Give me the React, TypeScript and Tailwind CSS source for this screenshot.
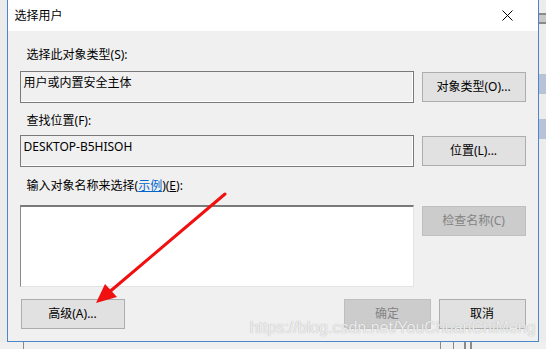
import React from "react";

const font = { fontFamily: '"Noto Sans", "Noto Sans CJK SC", sans-serif' };

function Btn({
	children,
	disabled,
	className = "",
}: {
	children: React.ReactNode;
	disabled?: boolean;
	className?: string;
}) {
	return (
		<div
			className={
				"flex h-[30px] items-center justify-center border text-[12px] leading-[16px] " +
				(disabled
					? "border-[#bfbfbf] bg-[#cccccc] text-[#838383] "
					: "border-[#adadad] bg-[#e1e1e1] text-black ") +
				className
			}
		>
			{children}
		</div>
	);
}

function Label({ children, className = "" }: { children: React.ReactNode; className?: string }) {
	return (
		<div className={"h-[16px] pl-[7px] text-[12px] leading-[16px] text-black " + className}>
			{children}
		</div>
	);
}

function ReadOnlyBox({ text }: { text: string }) {
	return (
		<div className="h-[32px] w-[394px] border border-[#7a7a7a] bg-[#f0f0f0] px-[3px] pt-[3px] text-[12px] leading-[16px] text-black shadow-[inset_-1px_-1px_0_#ffffff]">
			{text}
		</div>
	);
}

export default function App() {
	return (
		<div className="h-[349px] w-[546px] overflow-hidden bg-[#ececec]" style={font}>
			<div className="flex h-[342px]">
				{/* left backdrop */}
				<div className="w-[7px] bg-[#ebebeb]" />

				{/* dialog */}
				<div className="relative flex w-[532px] flex-col border-x border-b border-[#4a86c8] bg-[#f0f0f0]">
					<div className="flex h-[31px] shrink-0 items-center justify-between bg-white pl-[7px] pr-[25px]">
						<span className="text-[12px] leading-[16px] text-black">选择用户</span>
						<svg width="11" height="11" viewBox="0 0 11 11">
							<path d="M0.5 0.5 L10.5 10.5 M10.5 0.5 L0.5 10.5" stroke="#000" strokeWidth="1" />
						</svg>
					</div>

					<div className="flex flex-col px-[12px]">
						<Label className="mt-[16px]">选择此对象类型(S):</Label>
						<div className="mt-[8px] flex items-start gap-[8px]">
							<ReadOnlyBox text="用户或内置安全主体" />
							<Btn className="mt-[1px] w-[104px]">对象类型(O)...</Btn>
						</div>

						<Label className="mt-[10px]">查找位置(F):</Label>
						<div className="mt-[6px] flex items-start gap-[8px]">
							<ReadOnlyBox text="DESKTOP-B5HISOH" />
							<Btn className="mt-[1px] w-[104px]">位置(L)...</Btn>
						</div>

						<Label className="mt-[11px]">
							输入对象名称来选择(
							<span className="text-[#0066cc] underline">示例</span>
							)(<span className="underline">E</span>):
						</Label>
						<div className="mt-[11px] flex items-start gap-[8px]">
							<div className="h-[82px] w-[394px] border border-t-2 border-[#e3e3e3] border-t-[#7a7a7a] border-l-[#8a8a8a] bg-white" />
							<Btn disabled className="mt-[1px] w-[104px]">
								检查名称(C)
							</Btn>
						</div>

						<div className="mt-[12px] flex items-center">
							<Btn className="ml-[1px] w-[104px]">高级(A)...</Btn>
							<div className="flex-1" />
							<Btn disabled className="w-[87px]">
								确定
							</Btn>
							<Btn className="ml-[8px] w-[87px]">取消</Btn>
						</div>
					</div>

					{/* watermark */}
					<div
						className="pointer-events-none absolute bottom-[4px] right-[2px] whitespace-nowrap text-[16px] leading-[18px] text-white/80 [text-shadow:0_0_1px_#9a9a9a]"
						style={{ fontFamily: '"Liberation Sans", Arial, sans-serif' }}
					>
						https://blog.csdn.net/YouChuanChiMeng
					</div>

					{/* red annotation arrow */}
					<svg
						className="pointer-events-none absolute left-0 top-0"
						width="532"
						height="342"
						viewBox="7 0 532 342"
					>
						<line x1="224" y1="194" x2="106" y2="294" stroke="#f01010" strokeWidth="3" strokeLinecap="round" />
						<polygon points="95,303 104,284 116,297" fill="#f01010" />
					</svg>
				</div>

				{/* right backdrop */}
				<div className="flex w-[8px] flex-col bg-[#ececec]">
					<div className="h-[13px]" />
					<div className="h-[2px] bg-[#8a8a8a]" />
					<div className="h-[7px] bg-[#c8c8c8]" />
					<div className="h-[2px] bg-[#8a8a8a]" />
					<div className="h-[50px]" />
					<div className="h-[20px] bg-[#b7c3d6]" />
					<div className="h-[25px]" />
					<div className="h-[20px] bg-[#b7c3d6]" />
				</div>
			</div>

			{/* bottom backdrop */}
			<div className="flex h-[7px] bg-[#f0f0f0]">
				<div className="ml-[23px] w-px bg-[#8a8a8a]" />
				<div className="ml-[416px] w-px bg-[#8a8a8a]" />
				<div className="ml-[12px] w-px bg-[#8a8a8a]" />
				<div className="ml-[10px] w-[2px] bg-[#8a8a8a]" />
				<div className="ml-[4px] w-[2px] bg-[#8a8a8a]" />
			</div>
		</div>
	);
}
